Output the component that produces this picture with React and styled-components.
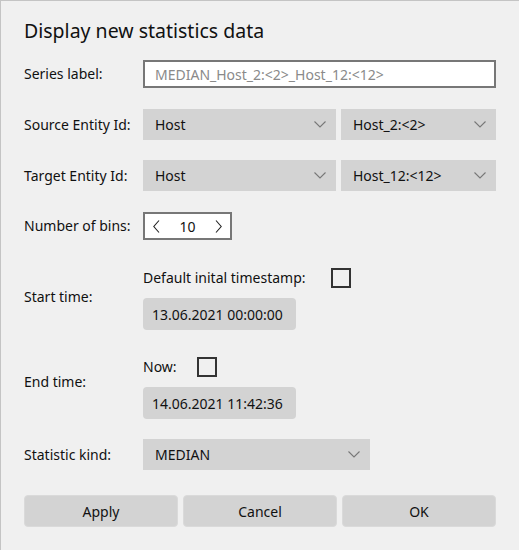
import React from "react";
import styled, { createGlobalStyle } from "styled-components";

const GlobalStyle = createGlobalStyle`
  html, body {
    margin: 0;
    padding: 0;
    background: #f0f0f0;
  }
  body {
    font-family: "Noto Sans", "Open Sans", sans-serif;
    font-size: 14px;
    color: #1a1a1a;
  }
`;

const Dialog = styled.div`
  width: 519px;
  height: 550px;
  box-sizing: border-box;
  background: #f0f0f0;
  border-top: 1px solid #c4c4c4;
  border-left: 1px solid #c4c4c4;
  padding: 17px 23px 0 23px;
  display: flex;
  flex-direction: column;
`;

const Title = styled.h1`
  margin: 0;
  font-size: 19.5px;
  font-weight: 400;
  line-height: 26px;
  color: #111;
`;

const Row = styled.div`
  display: grid;
  grid-template-columns: 119px 1fr;
  align-items: center;
  margin-top: ${(p) => p.$top}px;
`;

const Label = styled.div`
  font-size: 14px;
  line-height: 20px;
  color: #111;
  padding-top: ${(p) => (p.$shift > 0 ? p.$shift : 0)}px;
  padding-bottom: ${(p) => (p.$shift < 0 ? -p.$shift : 0)}px;
`;

const TextInput = styled.input`
  box-sizing: border-box;
  width: 353px;
  height: 28px;
  border: 2px solid #777;
  background: #fff;
  padding: 0 10px;
  font-family: inherit;
  font-size: 14px;
  color: #8a8a8a;
  outline: none;
`;

const Combos = styled.div`
  display: flex;
  gap: 5px;
`;

const Combo = styled.div`
  box-sizing: border-box;
  width: ${(p) => p.$w}px;
  height: 31px;
  background: #d3d3d3;
  display: flex;
  align-items: center;
  justify-content: space-between;
  padding: 0 10px 0 12px;
  font-size: 14px;
  color: #111;
`;

const Spin = styled.div`
  box-sizing: border-box;
  width: 89px;
  height: 28px;
  border: 2px solid #777;
  background: #fff;
  display: flex;
  align-items: center;
  justify-content: space-between;
  padding: 0 8px 0 8px;
  font-size: 14px;
  color: #111;
`;

const TimeBlock = styled.div`
  display: flex;
  flex-direction: column;
  align-items: flex-start;
  gap: 11px;
`;

const CheckLine = styled.div`
  display: flex;
  align-items: center;
  gap: ${(p) => p.$gap}px;
  font-size: 14px;
  color: #111;
  height: 19px;
`;

const Check = styled.span`
  box-sizing: border-box;
  width: 20px;
  height: 20px;
  border: 2px solid #333;
  display: inline-block;
`;

const DateButton = styled.div`
  box-sizing: border-box;
  width: 153px;
  height: 32px;
  border-radius: 4px;
  background: #d3d3d3;
  display: flex;
  align-items: center;
  padding-left: 9px;
  font-size: 14px;
  color: #111;
`;

const Buttons = styled.div`
  display: grid;
  grid-template-columns: repeat(3, 1fr);
  gap: 5px;
  width: 472px;
  margin-top: 25px;
`;

const Button = styled.button`
  height: 32px;
  border: 1px solid #dadada;
  border-radius: 4px;
  background: #d3d3d3;
  font-family: inherit;
  font-size: 14px;
  color: #111;
`;

const ChevronDown = () => (
  <svg width="12" height="7" viewBox="0 0 12 7">
    <path d="M0.5 0.5 L6 6 L11.5 0.5" fill="none" stroke="#777" strokeWidth="1.1" />
  </svg>
);

const ChevronSide = ({ dir }) => (
  <svg width="7" height="13" viewBox="0 0 7 13">
    <path
      d={dir === "left" ? "M6 0.5 L0.8 6.5 L6 12.5" : "M1 0.5 L6.2 6.5 L1 12.5"}
      fill="none"
      stroke="#222"
      strokeWidth="1.1"
    />
  </svg>
);

const App = () => {
  return (
    <>
      <GlobalStyle />
      <Dialog>
        <Title>Display new statistics data</Title>
        <Row $top={16}>
          <Label>Series label:</Label>
          <TextInput defaultValue="MEDIAN_Host_2:<2>_Host_12:<12>" />
        </Row>
        <Row $top={21}>
          <Label>Source Entity Id:</Label>
          <Combos>
            <Combo $w={193}>Host<ChevronDown /></Combo>
            <Combo $w={155}>Host_2:&lt;2&gt;<ChevronDown /></Combo>
          </Combos>
        </Row>
        <Row $top={20}>
          <Label>Target Entity Id:</Label>
          <Combos>
            <Combo $w={193}>Host<ChevronDown /></Combo>
            <Combo $w={155}>Host_12:&lt;12&gt;<ChevronDown /></Combo>
          </Combos>
        </Row>
        <Row $top={21}>
          <Label>Number of bins:</Label>
          <Spin>
            <ChevronSide dir="left" />
            <span>10</span>
            <ChevronSide dir="right" />
          </Spin>
        </Row>
        <Row $top={28}>
          <Label $shift={-4}>Start time:</Label>
          <TimeBlock>
            <CheckLine $gap={25}>
              Default inital timestamp:<Check />
            </CheckLine>
            <DateButton>13.06.2021 00:00:00</DateButton>
          </TimeBlock>
        </Row>
        <Row $top={27}>
          <Label $shift={-12}>End time:</Label>
          <TimeBlock>
            <CheckLine $gap={20}>
              Now:<Check />
            </CheckLine>
            <DateButton>14.06.2021 11:42:36</DateButton>
          </TimeBlock>
        </Row>
        <Row $top={20}>
          <Label>Statistic kind:</Label>
          <Combo $w={227}>MEDIAN<ChevronDown /></Combo>
        </Row>
        <Buttons>
          <Button>Apply</Button>
          <Button>Cancel</Button>
          <Button>OK</Button>
        </Buttons>
      </Dialog>
    </>
  );
};

export default App;
